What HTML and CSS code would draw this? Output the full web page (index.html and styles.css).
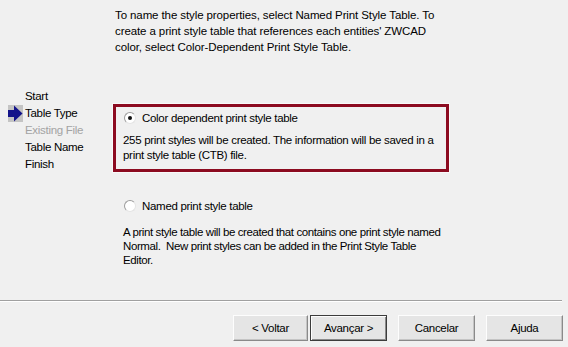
FILE: index.html
```html
<!doctype html>
<html>
<head>
<meta charset="utf-8">
<title>Table Type</title>
<link rel="stylesheet" href="styles.css">
</head>

<body>
<div class="wizard">
	<div class="main">
		<ul class="steps">
			<li><span class="mark"></span>Start</li>
			<li class="current"><span class="mark"><svg width="15" height="17" viewBox="0 0 15 17"><rect width="15" height="17" fill="#c4c4c4"/><polygon points="0,5 6,5 6,0.5 14.5,8.5 6,16.5 6,12 0,12" fill="#13138a"/></svg></span>Table Type</li>
			<li class="off"><span class="mark"></span>Existing File</li>
			<li><span class="mark"></span>Table Name</li>
			<li><span class="mark"></span>Finish</li>
		</ul>
		<div class="page">
			<p class="intro">To name the style properties, select Named Print Style Table. To<br>create a print style table that references each entities' ZWCAD<br>color, select Color-Dependent Print Style Table.</p>
			<div class="option selected">
				<label class="radio"><span class="dot on"></span>Color dependent print style table</label>
				<p class="desc">255 print styles will be created. The information will be saved in a<br>print style table (CTB) file.</p>
			</div>
			<div class="option second">
				<label class="radio"><span class="dot"></span>Named print style table</label>
				<p class="desc">A print style table will be created that contains one print style named<br>Normal.&nbsp; New print styles can be added in the Print Style Table<br>Editor.</p>
			</div>
		</div>
	</div>
	<div class="sep"></div>
	<div class="buttons">
		<button class="back">&lt; Voltar</button>
		<button class="next">Avançar &gt;</button>
		<button>Cancelar</button>
		<button>Ajuda</button>
	</div>
</div>
</body>
</html>
```

FILE: styles.css
```css
*{ margin:0; padding:0; list-style:none; box-sizing:border-box;}
body{ background:#f0f0f0; font-family:"Liberation Sans",Arial,sans-serif; font-size:11.5px; letter-spacing:-0.3px; color:#000;}
.wizard{ width:568px; height:347px;}

.main{ display:flex; height:300px;}
.steps{ width:113px; padding:88px 0 0 8px;}
.steps li{ display:flex; height:17px; line-height:17px;}
.steps .mark{ width:17px; display:flex; align-items:center;}
.steps .off{ color:#a3a3a3;}

.page{ width:360px;}
.intro{ padding:7px 0 0 2px; line-height:16px; letter-spacing:-0.1px; white-space:nowrap;}

.option{ width:336px; border:3px solid transparent; padding:3px 0 7px 7px; white-space:nowrap;}
.option.selected{ margin-top:49px; border-color:#8c0b20; box-shadow:0 0 0 1px #f9f9f9;}
.option.second{ margin-top:20px;}
.radio{ display:flex; align-items:center; height:16px; padding-left:1px;}
.dot{ width:12px; height:12px; border-radius:50%; margin-right:6px; background:#fff; border:1px solid #9c9c9c; border-right-color:#e4e4e4; border-bottom-color:#e4e4e4; position:relative;}
.dot.on:after{ content:''; position:absolute; left:3px; top:3px; width:4px; height:4px; border-radius:50%; background:#111;}
.desc{ margin-top:7px; line-height:14.5px;}
.second .desc{ margin-top:11px; line-height:14px; letter-spacing:-0.4px;}

.sep{ height:2px; margin-right:6px; border-top:1px solid #a0a0a0; border-bottom:1px solid #fff;}

.buttons{ display:flex; justify-content:flex-end; padding:13px 5px 0 0;}
.buttons button{ width:77px; height:26px; margin-left:11px; font:inherit; letter-spacing:inherit; color:#000; background:#e5e5e5; border:1px solid; border-color:#fdfdfd #8a8a8a #8a8a8a #fdfdfd; box-shadow:inset -1px -1px 0 #c4c4c4;}
.buttons .back{ width:75px; margin-left:0;}
.buttons .next{ margin-left:2px; border-color:#3c3c3c; box-shadow:inset 1px 1px 0 #fdfdfd, inset -1px -1px 0 #8a8a8a;}
```
